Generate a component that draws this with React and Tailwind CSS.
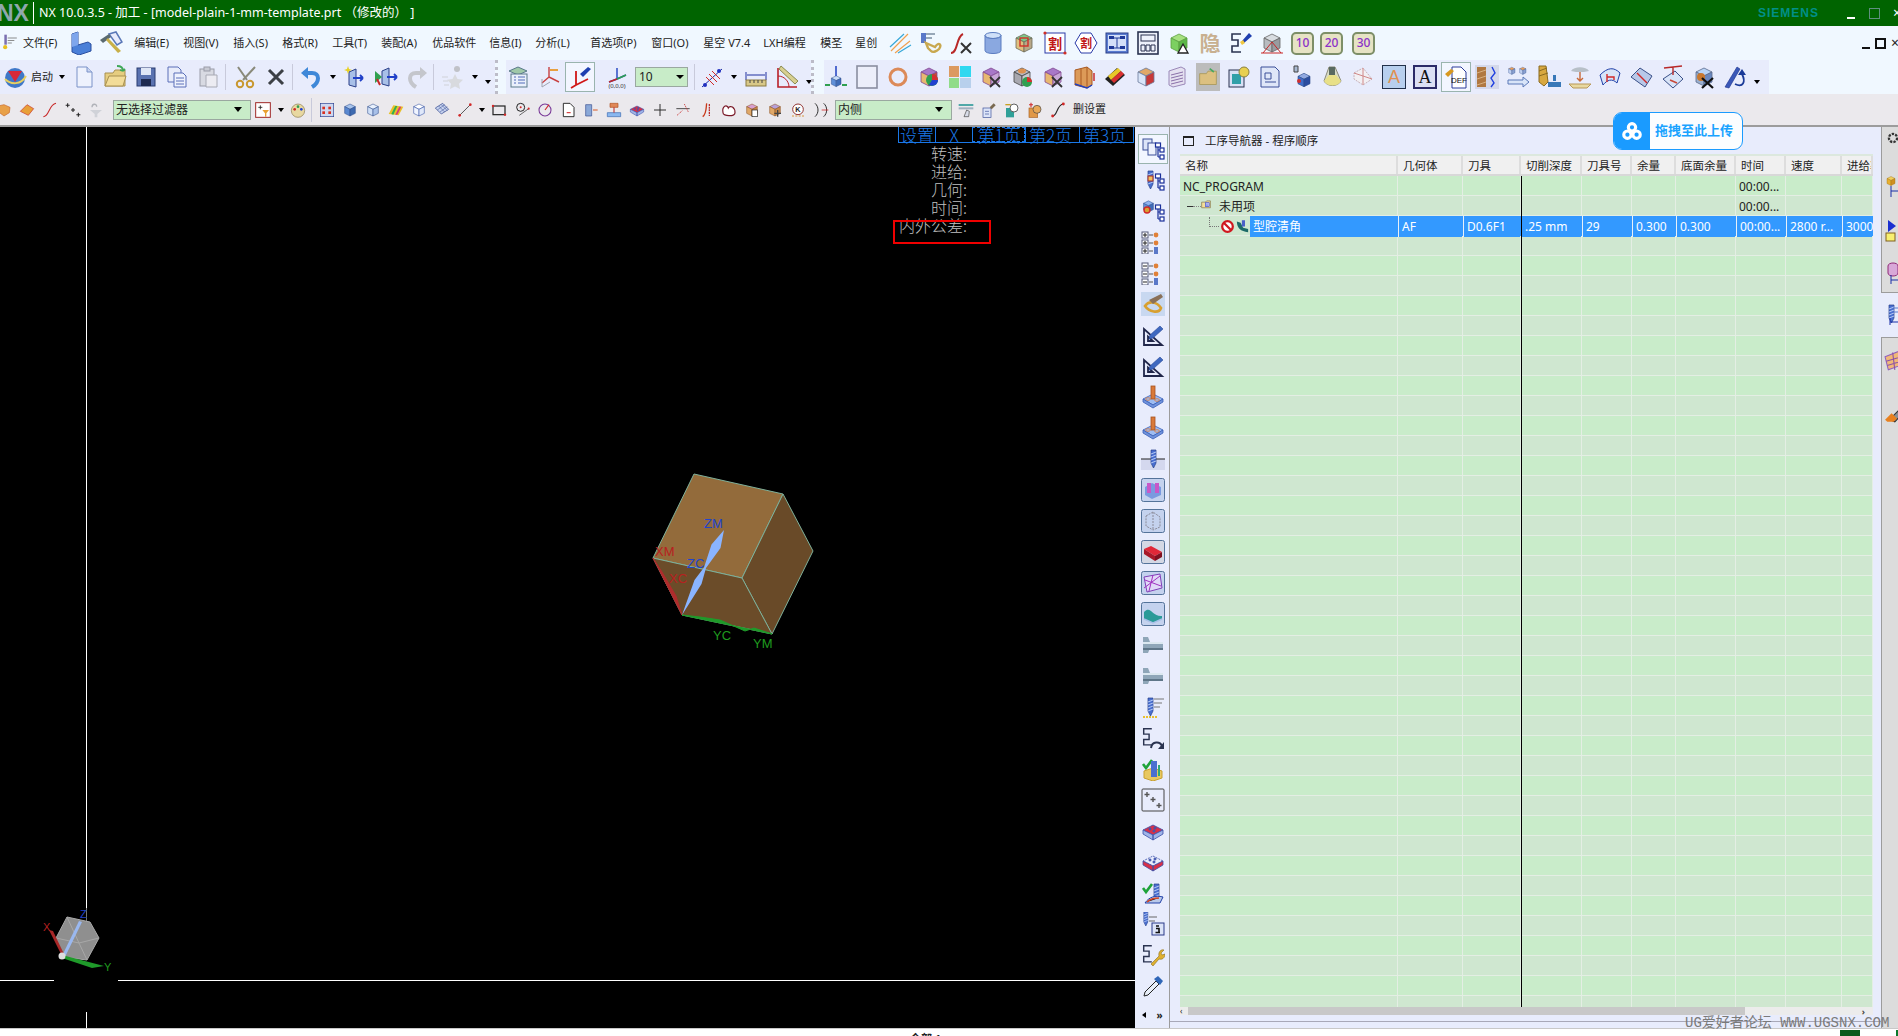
import React from 'react';

// small svg helpers for the NX toolbar pictures
const I = ({ children, className = 'w-6 h-6', box = '0 0 24 24' }) => (
  <svg viewBox={box} className={`shrink-0 ${className}`}>{children}</svg>
);

const Cube = ({ t = '#8fb4e8', l = '#5f8fd8', r = '#3f6cb8', s = '#2a4a8a', x = 0, y = 0, k = 1 }) => (
  <g transform={`translate(${x} ${y}) scale(${k})`} stroke={s} strokeWidth="0.8" strokeLinejoin="round">
    <path d="M12 3l8 4-8 4-8-4z" fill={t} />
    <path d="M4 7l8 4v10l-8-4z" fill={l} />
    <path d="M20 7l-8 4v10l8-4z" fill={r} />
  </g>
);

const Tree = ({ c = '#1a2f9a' }) => (
  <g stroke={c} fill="#fff" strokeWidth="1.2">
    <path d="M17 9v11M17 13h3M17 20h3" fill="none" />
    <rect x="14.5" y="6" width="5" height="4" />
    <rect x="19" y="11" width="4" height="4" />
    <rect x="19" y="18" width="4" height="4" />
  </g>
);

const Sbracket = () => <path d="M12 3H3v6h6v6H3v6h9" fill="none" stroke="#2a3350" strokeWidth="1.6" />;

const Drill = ({ x = 0, y = 0, k = 1 }) => (
  <g transform={`translate(${x} ${y}) scale(${k})`}>
    <path d="M6 2h5v13l-2.5 5L6 15z" fill="#4a6fd0" stroke="#25408a" strokeWidth="0.7" />
    <path d="M6 6l5-2M6 9l5-2M6 12l5-2M6 15l5-2" stroke="#cfe0ff" strokeWidth="0.8" />
  </g>
);

const Check = () => <path d="M2 7l3 4 6-8" fill="none" stroke="#1fa33a" strokeWidth="2.6" />;

const Plate = ({ wire }) => (
  <g stroke="#3a4fa8" strokeWidth="0.8">
    <path d="M12 6l10 5-10 5-10-5z" fill={wire ? '#e8ecfc' : '#d83048'} strokeDasharray={wire ? '2 1' : undefined} />
    <path d="M2 11v4l10 6v-5zM22 11v4l-10 6v-5z" fill={wire ? '#d83048' : '#9fb4e8'} />
    <circle cx="9" cy="10" r="1.1" fill="#4a5fb8" />
    <circle cx="14" cy="9" r="1.1" fill="#4a5fb8" />
    <circle cx="13" cy="12" r="1.1" fill="#4a5fb8" />
  </g>
);

const Pillar = () => (
  <g stroke="#3a5fb8" strokeWidth="0.8">
    <path d="M12 9l10 5-10 6-10-6z" fill="#9dbcf2" />
    <path d="M2 14v3l10 6 10-6v-3l-10 6z" fill="#6f92dc" />
    <rect x="10" y="1" width="4" height="13" fill="#d97a3a" stroke="#a8521e" />
    <ellipse cx="7" cy="14" rx="2.4" ry="1.3" fill="none" stroke="#d97a3a" />
    <ellipse cx="16" cy="15" rx="2.4" ry="1.3" fill="none" stroke="#d97a3a" />
  </g>
);

const CornerPen = () => (
  <g>
    <path d="M3 22V6l18 16zM7 18h5l-5-4.5z" fill="#e8ecfc" stroke="#20264a" strokeWidth="1.8" />
    <path d="M9 12L19 3l3 3-10 9-4 1z" fill="#3f69c0" stroke="#2a4a9a" strokeWidth="0.6" />
  </g>
);

const Holder = () => (
  <g>
    <path d="M2 4h5l2 5h13v6H9l-2 5H2z" fill="#8fa6b8" />
    <path d="M2 9h20v2H2z" fill="#dce8f0" />
    <path d="M2 15h20v2H2z" fill="#5f7688" />
  </g>
);

const Boxed = ({ children, bg = '#c4d2ee' }) => (
  <I>
    <rect x="0.5" y="0.5" width="23" height="23" rx="2" fill={bg} stroke="#54739a" />
    {children}
  </I>
);

const Arrow = ({ className = '' }) => (
  <span className={`w-0 h-0 shrink-0 border-x-[3px] border-x-transparent border-t-[4px] border-t-black ${className}`} />
);

const Sep = ({ className = 'h-[26px]' }) => <span className={`w-px bg-[#c8cadb] shrink-0 ${className}`} />;

const CjkIcon = ({ ch, c = '#c01818', s = 14, y = 17 }) => (
  <text x="12" y={y} fontSize={s} textAnchor="middle" fill={c} fontFamily="Noto Sans CJK SC, sans-serif" fontWeight="700">{ch}</text>
);

// ---------- menu row pictures ----------
const menuIcons = [
  <I key="m1"><path d="M3 20L20 3M7 22L22 10" stroke="#f0a050" strokeWidth="1.2" /><path d="M2 16L16 3M10 22L23 14" stroke="#38a8d8" strokeWidth="1.2" /></I>,
  <I key="m2"><path d="M2 2h5v10H2z" fill="#5a78c8" /><path d="M7 12l9 4c4-6 7-2 4 2-2 2-6 4-8 2l-3-3z" fill="none" stroke="#c8a850" strokeWidth="2.4" /><path d="M7 3h9M7 7h6" stroke="#98a8b8" strokeWidth="2" /></I>,
  <I key="m3"><path d="M1 22c7 0 5-16 12-19" fill="none" stroke="#b82828" strokeWidth="2" /><path d="M11 12l10 10M21 12L11 22" stroke="#333" strokeWidth="2" /></I>,
  <I key="m4"><ellipse cx="12" cy="4.5" rx="8" ry="3" fill="#cfe0f8" stroke="#5a7cc0" /><path d="M4 4.5v15c0 4 16 4 16 0v-15c0 4-16 4-16 0z" fill="#8aa8e0" stroke="#5a7cc0" /></I>,
  <I key="m5"><Cube t="#7cc88a" l="#e0c080" r="#b8a888" s="#6a6a58" /><rect x="8" y="7" width="8" height="8" fill="none" stroke="#d03028" strokeWidth="1.4" /></I>,
  <I key="m6"><rect x="2" y="2" width="20" height="20" fill="#fff" stroke="#2a3aa8" /><CjkIcon ch="割" y={18} /><circle cx="2" cy="2" r="1.6" fill="#d03028" /><circle cx="22" cy="22" r="1.6" fill="#d03028" /></I>,
  <I key="m7"><path d="M7 2h10l6 10-6 10H7L1 12z" fill="#fff" stroke="#2a3aa8" /><CjkIcon ch="割" s={12} y={16.5} /></I>,
  <I key="m8"><rect x="1" y="2" width="22" height="20" fill="#5a7cd0" stroke="#2a3f88" /><rect x="3" y="4" width="18" height="16" fill="#d4e0f8" /><path d="M7 7h10M12 7v10M7 17h10" stroke="#1f3a98" /><rect x="4" y="5" width="5" height="3" fill="#1f3a98" /><rect x="15" y="5" width="5" height="3" fill="#1f3a98" /><rect x="4" y="15" width="5" height="3" fill="#1f3a98" /><rect x="15" y="15" width="5" height="3" fill="#1f3a98" /></I>,
  <I key="m9"><rect x="2" y="1" width="20" height="22" fill="#eef2fb" stroke="#2a3350" strokeWidth="1.6" /><rect x="5" y="4" width="14" height="6" fill="none" stroke="#2a3350" /><path d="M5 14h4v6H5zM10 14h4v6h-4zM15 14h4v6h-4z" fill="none" stroke="#2a3350" /></I>,
  <I key="m10"><Cube t="#a6e080" l="#7cd060" r="#5cb848" s="#5ca040" /><path d="M16 13l5 9h-10z" fill="#fff" stroke="#222" strokeWidth="1.3" /></I>,
  <I key="m11"><CjkIcon ch="隐" c="#c8b090" s={21} y={20} /></I>,
  <I key="m12"><Sbracket /><path d="M13 10l7-8 3 3-8 7z" fill="#1f3fb0" /><path d="M11 11l3-2 2 3-3 2z" fill="#f0c840" /></I>,
  <I key="m13"><Cube t="#d8dce0" l="#b8bcc0" r="#989ca0" s="#666" /><path d="M1 22h22M12 11L3 22M12 11l9 11" stroke="#c82828" fill="none" /></I>,
];

const CountBtn = ({ n }) => (
  <span className="w-[23px] h-[23px] shrink-0 rounded-[5px] bg-[#e6e3c4] border-2 border-[#7d8f68] flex items-center justify-center text-[12px] font-medium text-[#8a30c8]">{n}</span>
);

// ---------- big toolbar pictures ----------
const bigA = [
  <I key="a1"><path d="M5 2h10l5 5v15H5z" fill="#eef2fd" stroke="#7a92c8" /><path d="M15 2v5h5" fill="#c8d4f0" stroke="#7a92c8" /></I>,
  <I key="a2"><path d="M2 8h8l2-3h10v16H2z" fill="#e6cd80" stroke="#a89050" /><path d="M2 21L6 11h17l-3 10z" fill="#f2dc98" stroke="#a89050" /><path d="M14 1c4 0 6 2 6 5m0 0l2-2m-2 2l-3-1" fill="none" stroke="#3fa858" strokeWidth="1.8" /></I>,
  <I key="a3"><rect x="3" y="3" width="18" height="18" fill="#5a72b0" stroke="#2a3c70" /><rect x="7" y="3" width="10" height="7" fill="#dfe6f6" /><rect x="7" y="14" width="10" height="7" fill="#1e2a50" /></I>,
  <I key="a4"><path d="M3 2h10l3 3v12H3z" fill="#e8ecfa" stroke="#5a6fb8" /><path d="M9 8h9l3 3v11H9z" fill="#eef2fd" stroke="#5a6fb8" /><path d="M11 13h8M11 16h8M11 19h8" stroke="#5a6fb8" /></I>,
  <I key="a5"><rect x="4" y="4" width="14" height="17" fill="#d8dae2" stroke="#9a9ca8" /><rect x="8" y="2" width="6" height="4" fill="#c8cad4" stroke="#9a9ca8" /><path d="M10 10h11v12H10z" fill="#ececf2" stroke="#a8aab4" /></I>,
];

const scissors = <I key="s"><path d="M10 15L22 2M14 15L5 2" stroke="#8a8a7a" strokeWidth="2" /><circle cx="7" cy="19" r="3.2" fill="none" stroke="#c89830" strokeWidth="2" /><circle cx="17" cy="19" r="3.2" fill="none" stroke="#c89830" strokeWidth="2" /></I>;
const cross = <I key="x"><path d="M5 5l14 14M19 5L5 19" stroke="#3c4046" strokeWidth="3" /></I>;
const undo = <I key="u"><path d="M13 22c8-5 8-14 0-14H4" fill="none" stroke="#3f88d8" strokeWidth="4" /><path d="M9 2L2 8l7 6z" fill="#3f88d8" /></I>;
const panelIn = <I key="p1"><path d="M6 7l7-3v18l-7-2z" fill="#a8c0e8" stroke="#2a3f88" /><path d="M10 13h10m0 0l-3-3m3 3l-3 3" stroke="#2040c8" strokeWidth="1.8" fill="none" /><path d="M5 1l1 3 3 1-3 1-1 3-1-3-3-1 3-1z" fill="#e8d020" /></I>;
const panelOut = <I key="p2"><path d="M8 6l7-3v18l-7-2z" fill="#a8c0e8" stroke="#2a3f88" /><path d="M1 6l7 6-7 6z" fill="#30a050" /><path d="M3 14l3 6" stroke="#c82828" strokeWidth="2" /><path d="M13 12h10m0 0l-3-3m3 3l-3 3" stroke="#2040c8" strokeWidth="1.8" fill="none" /></I>;
const redo = <I key="r"><path d="M11 22c-8-5-8-14 0-14h9" fill="none" stroke="#c4c6cc" strokeWidth="4" /><path d="M15 2l7 6-7 6z" fill="#c4c6cc" /></I>;
const star = <I key="st"><path d="M14 9l2.5 5 5.5.8-4 4 1 5.2-5-2.6-5 2.6 1-5.2-4-4 5.5-.8z" fill="#d8dade" /><path d="M1 12h6M2 16h5M3 20h5" stroke="#d0d2d8" /><circle cx="16" cy="4" r="3" fill="#c0c2c8" /></I>;

const bigB = [
  <I key="b1"><path d="M3 6l9-4 9 4-9 4z" fill="#9fc8a8" stroke="#5a7a8a" /><rect x="5" y="9" width="16" height="13" fill="#eaf0fb" stroke="#5a7a8a" /><path d="M8 12h2M8 15h2M8 18h2M12 12h7M12 15h7M12 18h7" stroke="#506ab8" /></I>,
  <I key="b2"><path d="M12 12V2M12 12l10 5M12 12l-7 6" stroke="#c84040" fill="none" strokeWidth="1.4" /><path d="M5 22v-8m0 8l8-5" stroke="#a0a4b0" fill="none" /><path d="M13 4h8v2h-8z" fill="#e8a040" /></I>,
];
const triadLight = (
  <span key="b3" className="w-[30px] h-[30px] -mx-[3px] shrink-0 bg-[#f2f6ff] border border-[#9ab4ae] flex items-center justify-center">
    <I><path d="M8 20V6M8 20l12-6M8 20l-5 3" stroke="#d01818" strokeWidth="1.8" fill="none" /><path d="M12 9l8-7 3 2-8 8z" fill="#1f3fb0" /></I>
  </span>
);
const triadAbs = <I key="b4"><path d="M12 14V3M12 14l9-4M12 14l-8 3" stroke="#2040c0" strokeWidth="1.4" fill="none" /><path d="M12 14l9-4" stroke="#30a050" strokeWidth="1.4" /><path d="M12 14l-8 3" stroke="#c02828" strokeWidth="1.4" /><text x="12" y="23" fontSize="6" textAnchor="middle" fill="#333">(0,0,0)</text></I>;
const netLine = <I key="b5"><path d="M2 22L22 4" stroke="#2030a0" /><path d="M6 12l8 8M9 9l8 8M12 6l8 8" stroke="#d02828" /><circle cx="5" cy="20" r="2" fill="#2030c0" /><circle cx="19" cy="6" r="2" fill="#2030c0" /></I>;
const ruler = <I key="b6"><path d="M2 7v8M22 7v8M3 10h18" stroke="#2030a0" fill="none" /><rect x="2" y="15" width="20" height="6" fill="#d8c888" stroke="#8a7a40" /><path d="M6 15v3M10 15v3M14 15v3M18 15v3" stroke="#444" /></I>;
const protractor = <I key="b7"><path d="M3 3v19h19" fill="none" stroke="#b82028" strokeWidth="1.6" /><path d="M3 11c6 0 11 5 11 11" fill="none" stroke="#b82028" /><path d="M6 1l17 15-3 3L4 4z" fill="#d8d090" stroke="#8a8a50" /></I>;

const bigC = [
  <I key="c1"><Cube k={0.6} x={5} y={9} t="#c8dcf8" /><path d="M12 11V1" stroke="#2040c0" strokeWidth="1.5" /><path d="M1 20h5M18 20h5" stroke="#30a050" strokeWidth="1.8" /></I>,
  <I key="c2"><rect x="2" y="1" width="20" height="22" fill="#eceefa" stroke="#8a8ea0" strokeWidth="1.6" /></I>,
  <I key="c3"><circle cx="12" cy="12" r="8" fill="none" stroke="#dc8a58" strokeWidth="3" /></I>,
  <I key="c4"><Cube t="#a878c8" l="#e8b870" r="#d04838" s="#804890" /><circle cx="15" cy="15" r="6" fill="#30a050" /><path d="M15 15V9a6 6 0 0 1 6 6z" fill="#d83030" /><path d="M15 15h6a6 6 0 0 1-9 5z" fill="#2040d0" /></I>,
  <I key="c5"><rect x="1" y="1" width="10" height="11" fill="#dc9a60" /><rect x="12" y="1" width="11" height="11" fill="#30d8f0" /><rect x="1" y="13" width="10" height="10" fill="#90dc88" /><rect x="12" y="13" width="11" height="10" fill="#b8d0ec" /></I>,
  <I key="c6"><Cube t="#a878c8" l="#e8b870" r="#c8a8d8" s="#804890" /><path d="M11 12l10 10M21 12L11 22" stroke="#333" strokeWidth="1.8" /></I>,
  <I key="c7"><Cube t="#b8b8c0" l="#a8a8b0" r="#c8c8d0" s="#444" /><ellipse cx="12" cy="6" rx="4" ry="2.4" fill="#dc9050" /><circle cx="17" cy="17" r="5" fill="#30a050" /><path d="M17 17v-5a5 5 0 0 1 5 5z" fill="#d83030" /></I>,
  <I key="c8"><Cube t="#a878c8" l="#e8b870" r="#c8a8d8" s="#804890" /><path d="M11 12l10 10M21 12L11 22" stroke="#333" strokeWidth="1.8" /></I>,
  <I key="c9"><path d="M3 5l12-3 5 4v14l-5 3-12-3z" fill="#dc9a58" stroke="#a85820" /><path d="M9 4v18M15 2v21" stroke="#a85820" /><path d="M3 19l12 4 5-3" fill="none" stroke="#2040c0" strokeWidth="1.4" /><path d="M22 16V8" stroke="#c82020" strokeWidth="1.4" /></I>,
  <I key="c10"><path d="M2 14L14 3l8 7-12 11z" fill="#222" /><path d="M5 11L15 3l3 3L8 15z" fill="#e8c828" /><path d="M8 15L18 6l3 3-10 9z" fill="#d83030" /></I>,
  <I key="c11"><Cube t="#e0a868" l="#d8e4f8" r="#c83838" s="#6a7a9a" /></I>,
  <I key="c12"><path d="M4 6l12-4 4 2v15l-12 3-4-2z" fill="#e4e0f0" stroke="#9a88b8" /><path d="M6 10l12-3M6 13l12-3M6 16l12-3M6 19l12-3" stroke="#8a70a8" /></I>,
  <span key="c13" className="w-6 h-[28px] -my-[2px] shrink-0 bg-[#bcbcbc] flex items-center justify-center"><I className="w-5 h-5"><path d="M2 8h8l2-3h10v16H2z" fill="#dcc080" stroke="#a89858" /><path d="M14 2l5 4" stroke="#48a860" strokeWidth="2" /></I></span>,
  <I key="c14"><rect x="2" y="5" width="15" height="17" fill="#d8e0f4" stroke="#2a3350" /><rect x="5" y="9" width="9" height="10" fill="#30a0a8" /><circle cx="17" cy="7" r="5" fill="#e8d050" stroke="#8a8040" /></I>,
  <I key="c15"><path d="M3 2h14l4 4v16H3z" fill="#dfe6f8" stroke="#3a4f98" /><path d="M7 8h6v6H7zM7 17h11" stroke="#3a4f98" fill="none" /></I>,
  <I key="c16"><path d="M5 1h4v6H5z" fill="#a8b8d0" stroke="#444" /><Cube k={0.75} x={6} y={6} t="#90a8e0" l="#3f6cc8" r="#2a4ca0" /><circle cx="10" cy="16" r="2" fill="#d03030" /></I>,
  <I key="c17"><path d="M9 2l6 0 6 14c-3 6-14 6-17 0z" fill="#d8dcc8" stroke="#8a8a78" /><path d="M4 16c3 6 14 6 17 0l-5-6H9z" fill="#e8e088" /><path d="M9 2h6v8H9z" fill="#5a6a60" /></I>,
  <I key="c18"><path d="M3 8l9-5 9 11-9 6-9-6z" fill="#f2f0f4" stroke="#c8b0b8" strokeDasharray="2 1" /><path d="M3 8l18 6M12 3v17" stroke="#d08888" /></I>,
  <span key="c19" className="w-6 h-6 shrink-0 bg-[#b8cfee] border border-[#22304a] flex items-center justify-center text-[18px] text-[#e09050] font-['Liberation_Sans',sans-serif] leading-none">A</span>,
  <span key="c20" className="w-6 h-6 shrink-0 bg-[#dcdff4] border-2 border-[#2c2a68] flex items-center justify-center text-[18px] text-[#111] font-['Liberation_Serif',serif] leading-none">A</span>,
  <span key="c21" className="w-[30px] h-[30px] -mx-[3px] shrink-0 bg-[#f2f6ff] border border-[#9ab4ae] flex items-center justify-center">
    <I><path d="M8 2h9l5 5v16H8z" fill="#fff" stroke="#2a3a9a" /><text x="15" y="18" fontSize="8" textAnchor="middle" fill="#111" fontFamily="Liberation Sans, sans-serif">DEF</text><path d="M1 9l6-5 3 2-6 6z" fill="#d89820" /></I>
  </span>,
  <span key="c22" className="w-6 h-6 shrink-0 bg-[#d4d8ea] flex items-center"><I><rect x="2" y="2" width="9" height="20" fill="#b07840" /><path d="M2 8l9-3M2 14l9-3M2 20l9-3" stroke="#d8b080" /><path d="M17 2l3 6-4 5 3 5-3 4" fill="none" stroke="#2040e0" strokeWidth="1.4" /></I></span>,
  <I key="c23"><Cube k={0.4} x={1} y={1} t="#e8a060" l="#c0d0f0" r="#8aa0d0" /><Cube k={0.4} x={12} y={1} t="#e8a060" l="#c0d0f0" r="#8aa0d0" /><path d="M2 15h15v-3l6 5-6 5v-3H2z" fill="#d8e4f8" stroke="#5a78b8" /></I>,
  <I key="c24"><path d="M2 1h7l2 16-4 4-5-4z" fill="#d8a840" stroke="#8a6a20" /><path d="M2 6l8-3M2 11l9-3" stroke="#8a6a20" /><rect x="16" y="10" width="3" height="6" fill="#3878b8" /><path d="M11 17h13v5H11z" fill="#3878b8" /></I>,
  <I key="c25"><path d="M3 6c3-5 15-5 18 0l-5 1H8z" fill="#b8c0c8" /><path d="M12 7v9M9 13l3 3 3-3" stroke="#c86838" strokeWidth="1.4" fill="none" /><path d="M1 19h22l-4 4H5z" fill="#e8d8a0" stroke="#b89858" /></I>,
  <I key="c26"><path d="M1 10c8-8 14-8 20-2l-3 10c-5-5-10-3-14 2z" fill="#d8e4f8" stroke="#2040a8" /><path d="M8 9v8M8 12h7v3" stroke="#d02828" strokeWidth="1.4" fill="none" /></I>,
  <I key="c27"><path d="M1 12L10 3l12 8-7 11z" fill="#b8c8e8" stroke="#3a5088" /><path d="M7 8l10 10" stroke="#d02828" strokeWidth="1.4" /></I>,
  <I key="c28"><path d="M2 14L14 6l8 8-10 9z" fill="#d8e4f8" stroke="#3a5088" /><path d="M3 3l18-2M12 2v8" stroke="#b82828" strokeWidth="1.4" /><path d="M9 15l7 3" stroke="#c84838" strokeWidth="1.6" /></I>,
  <I key="c29"><Cube t="#b8d4f8" l="#9ab0d0" r="#6a88c0" s="#5a6a8a" /><circle cx="9" cy="12" r="4" fill="#c87830" /><path d="M10 13l11 10M21 13L10 23" stroke="#111" strokeWidth="2.2" /></I>,
  <I key="c30"><path d="M2 22L14 2l3 2L6 23z" fill="#3a58b8" stroke="#1a2f8a" strokeWidth="0.6" /><path d="M12 19c8 4 11-2 7-10" fill="none" stroke="#1a3a98" strokeWidth="1.8" /><path d="M19 4l4 6h-8z" fill="#1a3a98" /></I>,
];

// ---------- selection row pictures ----------
const smallA = [
  <I key="d1" className="w-4 h-4"><path d="M3 6l9-2 9 4-1 8-8 5-8-6z" fill="#e8a048" stroke="#c86828" /></I>,
  <I key="d2" className="w-4 h-4"><path d="M2 14L12 4l10 6-8 10z" fill="#e8a038" stroke="#c83020" /></I>,
  <I key="d3" className="w-4 h-4"><path d="M2 22c9 0 8-18 19-20" fill="none" stroke="#c82828" strokeWidth="1.6" /></I>,
  <I key="d4" className="w-4 h-4"><path d="M4 2v6M1 5h6M12 9v6M9 12h6M20 16v6M17 19h6" stroke="#222" strokeWidth="1.6" /></I>,
  <I key="d5" className="w-4 h-4"><path d="M3 12h18l-7 6v5h-4v-5z" fill="#d0d2d8" /><path d="M6 8c0-6 7-6 7-1" fill="none" stroke="#b0b2b8" strokeWidth="2" /></I>,
];

const smallB = [
  <I key="e1" className="w-4 h-4"><rect x="2" y="2" width="20" height="20" fill="#cfd8f0" stroke="#2a4090" /><rect x="5" y="7" width="4" height="4" fill="#d83020" /><rect x="14" y="7" width="4" height="4" fill="#d83020" /><rect x="5" y="14" width="4" height="4" fill="#d83020" /><rect x="14" y="14" width="4" height="4" fill="#d83020" /></I>,
  <I key="e2" className="w-4 h-4"><Cube t="#a8c4ec" l="#5a88d0" r="#3e6ab0" /></I>,
  <I key="e3" className="w-4 h-4"><Cube t="#e8f0fc" l="#d0e0f8" r="#a8c0e8" /></I>,
  <I key="e4" className="w-4 h-4"><path d="M1 18L8 5l15 2-7 13z" fill="#e8c028" /><path d="M5 18L11 6h3L8 19z" fill="#30b050" /><path d="M11 19l6-12h3l-6 12z" fill="#d83878" /></I>,
  <I key="e5" className="w-4 h-4"><Cube t="#fff" l="#f0f4ff" r="#e0e8fa" s="#2a4aa0" /></I>,
  <I key="e6" className="w-4 h-4"><path d="M2 9l11-7 9 9-11 7z" fill="#c8d4f0" stroke="#2a3f88" /><path d="M7 6l9 9M11 4l9 9M5 12L16 4M9 15l11-8" stroke="#2a3f88" strokeWidth="0.7" /></I>,
  <I key="e7" className="w-4 h-4"><path d="M4 20L20 4" stroke="#333" strokeWidth="1.2" /><circle cx="4" cy="20" r="2" fill="#d02828" /><circle cx="20" cy="4" r="2" fill="#d02828" /></I>,
];

const smallC = [
  <I key="f1" className="w-4 h-4"><rect x="3" y="6" width="18" height="13" fill="none" stroke="#222" strokeWidth="1.8" /><circle cx="3" cy="6" r="1.8" fill="#d02828" /><circle cx="21" cy="19" r="1.8" fill="#d02828" /></I>,
  <I key="f2" className="w-4 h-4"><circle cx="10" cy="8" r="6" fill="none" stroke="#222" strokeWidth="1.5" /><path d="M8 20l14-10" stroke="#222" /><circle cx="10" cy="8" r="1.5" fill="#d02828" /><circle cx="22" cy="10" r="1.6" fill="#d02828" /></I>,
  <I key="f3" className="w-4 h-4"><circle cx="12" cy="12" r="9" fill="none" stroke="#7a3a98" strokeWidth="1.6" /><path d="M12 12l6-8" stroke="#d02828" strokeWidth="1.6" /></I>,
  <I key="f4" className="w-4 h-4"><path d="M5 2h10l6 6v14H5z" fill="#fff" stroke="#222" strokeWidth="1.4" /><path d="M10 16h6" stroke="#d02828" strokeWidth="1.6" /></I>,
  <I key="f5" className="w-4 h-4"><path d="M4 4h9v17H4z" fill="#8aa8d8" stroke="#3a5090" /><path d="M15 12h7" stroke="#d86030" strokeWidth="1.6" /></I>,
  <I key="f6" className="w-4 h-4"><path d="M2 16h20v6H2z" fill="#8ab8f0" stroke="#3a68b0" /><path d="M6 2h12v6H6z" fill="#e08858" stroke="#b0501e" /><path d="M12 8v8" stroke="#c02020" strokeWidth="1.5" /></I>,
  <I key="f7" className="w-4 h-4"><Plate /></I>,
  <I key="f10" className="w-4 h-4"><path d="M3 12h18M12 3v18" stroke="#222" strokeWidth="1.4" /></I>,
  <I key="f11" className="w-4 h-4"><path d="M2 10h20" stroke="#222" strokeWidth="1.2" /><path d="M14 3l6 12M3 20l8-7" stroke="#c83030" strokeWidth="1.2" strokeDasharray="2 1" /></I>,
  <I key="f12" className="w-4 h-4"><path d="M7 22c6-4 5-14 6-20" fill="none" stroke="#c83818" strokeWidth="2" /><path d="M17 3v18" stroke="#b82020" strokeWidth="1.8" strokeDasharray="3 1" /></I>,
  <I key="f13" className="w-4 h-4"><path d="M3 16c-2-10 6-13 8-7 3-5 10-1 10 7 0 6-18 6-18 0z" fill="#fff" stroke="#7a1a28" strokeWidth="1.8" /></I>,
  <I key="f14" className="w-4 h-4"><Cube t="#d8a0d0" l="#e0a868" r="#c88848" s="#8a5020" /><rect x="12" y="12" width="8" height="10" fill="#fff" stroke="#222" /></I>,
  <I key="f15" className="w-4 h-4"><Cube t="#b8a0d8" l="#e0a868" r="#c88848" s="#8a5020" /><path d="M16 12v10M11 17h10" stroke="#444" strokeWidth="2" /></I>,
  <I key="f16" className="w-4 h-4"><circle cx="12" cy="11" r="8" fill="#fff" stroke="#8a2a28" strokeWidth="1.4" /><text x="12" y="15" fontSize="11" fontWeight="700" textAnchor="middle" fill="#222" fontFamily="Liberation Sans, sans-serif">K</text><path d="M3 21h18" stroke="#d89030" strokeWidth="1.4" strokeDasharray="3 2" /></I>,
  <I key="f17" className="w-4 h-4"><path d="M3 2c6 5 6 15 0 20M16 2c6 5 6 15 0 20" fill="none" stroke="#222" strokeWidth="1.4" /><path d="M13 12h10" stroke="#d02828" strokeWidth="1.2" /></I>,
];

const smallD = [
  <I key="g1" className="w-4 h-4"><rect x="1" y="3" width="22" height="3" fill="#50a8a8" /><rect x="1" y="8" width="22" height="3" fill="#a0b0c0" /><path d="M9 22l4-10 4 2-1 8z" fill="#d8dce8" stroke="#444" /></I>,
  <I key="g2" className="w-4 h-4"><rect x="3" y="9" width="12" height="14" fill="#dce4f8" stroke="#3a4f98" /><path d="M6 14h6M6 18h6" stroke="#3a4f98" /><path d="M13 8l6-6 3 3-6 6z" fill="#7a6a50" /></I>,
  <I key="g3" className="w-4 h-4"><rect x="3" y="9" width="12" height="14" fill="#30a098" /><circle cx="15" cy="9" r="6" fill="#fff" stroke="#555" strokeWidth="1.4" /><rect x="2" y="3" width="8" height="2" fill="#c8a020" /></I>,
  <I key="g4" className="w-4 h-4"><rect x="3" y="9" width="13" height="14" fill="#e09848" stroke="#a86020" /><circle cx="15" cy="11" r="6" fill="#e8a858" stroke="#444" /><path d="M6 1v7M3 4h6" stroke="#d02828" strokeWidth="1.6" /></I>,
  <I key="g5" className="w-4 h-4"><path d="M4 21c7 0 6-17 16-18" fill="none" stroke="#222" strokeWidth="1.6" /><circle cx="4" cy="21" r="2.2" fill="#d02828" /><circle cx="20" cy="3" r="2.2" fill="#d02828" /></I>,
];

// ---------- left strip ----------
const sideIcons = [
  <span key="1" className="w-[30px] h-[30px] -my-[3px] shrink-0 bg-[#f2f6ff] border border-[#9ab4ae] flex items-center justify-center"><I><rect x="2" y="2" width="9" height="11" fill="#dce4f8" stroke="#3a4f98" /><rect x="7" y="6" width="8" height="12" fill="#eef2fd" stroke="#3a4f98" /><Tree /></I></span>,
  <I key="2"><Drill x={1} y={1} /><rect x="7" y="8" width="5" height="5" fill="#f0c060" stroke="#a02828" /><Tree /></I>,
  <I key="3"><Cube k={0.62} t="#90b4f0" l="#5f8fd8" r="#3f6cb8" /><circle cx="6" cy="11" r="3" fill="#d8a030" stroke="#d02828" strokeWidth="1.4" /><Tree /></I>,
  <I key="4"><g fill="#fff" stroke="#555a78"><rect x="1" y="2" width="6" height="6" /><rect x="1" y="10" width="6" height="6" /><rect x="1" y="18" width="6" height="6" /></g><path d="M2 5h4M4 3v4M2 13h4M4 11v4M2 21h4M4 19v4" stroke="#222" /><path d="M8 5h4M8 13h4M8 21h4" stroke="#555" /><circle cx="15" cy="5" r="2.4" fill="#e08038" /><circle cx="15" cy="13" r="2.4" fill="#e08038" /><rect x="13" y="17" width="4" height="7" fill="#5a78c8" /></I>,
  <I key="5"><g fill="#fff" stroke="#555a78"><rect x="1" y="2" width="6" height="6" /><rect x="1" y="10" width="6" height="6" /><rect x="1" y="18" width="6" height="6" /></g><path d="M2 5h4M2 13h4M2 21h4" stroke="#222" /><path d="M8 5h4M8 13h4M8 21h4" stroke="#555" /><circle cx="15" cy="5" r="2.4" fill="#e08038" /><circle cx="15" cy="13" r="2.4" fill="#e08038" /><rect x="13" y="17" width="4" height="7" fill="#5a78c8" /></I>,
  <I key="6"><rect x="0" y="0" width="24" height="24" fill="#c8d8f0" /><path d="M4 14c4-6 12-4 16 2-2 6-12 4-16-2z" fill="none" stroke="#d8a030" strokeWidth="2.6" /><path d="M8 8l12-6 2 3-10 7z" fill="#8a7058" /></I>,
  <I key="7"><CornerPen /></I>,
  <I key="8"><CornerPen /></I>,
  <I key="9"><Pillar /></I>,
  <I key="10"><Pillar /></I>,
  <I key="11"><rect x="0" y="12" width="24" height="11" fill="#d4d8ee" /><path d="M0 12h24" stroke="#222" /><Drill x={4} y={1} /></I>,
  <Boxed key="12"><path d="M4 9l7-4 9 4v8l-9 4-7-4z" fill="#7a9ae0" /><path d="M6 5h4v10H6zM14 5h4v10h-4z" fill="#c858c8" /></Boxed>,
  <Boxed key="13"><path d="M5 7l7-4 7 5v10l-7 3-7-4z" fill="none" stroke="#8a8a98" strokeDasharray="2 1" /><path d="M12 3v18" stroke="#8a8a98" strokeDasharray="2 1" /></Boxed>,
  <Boxed key="14" bg="#d4d8e4"><path d="M3 9l7-3 11 6-7 4z" fill="#e02838" /><path d="M3 9v5l11 7v-5z" fill="#a81828" /><path d="M14 16v5l7-4v-5z" fill="#801020" /></Boxed>,
  <Boxed key="15"><path d="M3 6l16-3 2 14-15 4z" fill="#e0d8f8" stroke="#8040b8" /><path d="M4 9l16 6M12 4l-4 16M3 17L19 5" stroke="#a030c0" /></Boxed>,
  <Boxed key="16"><path d="M3 10c7-7 8 5 18 4v3l-9 4-9-4z" fill="#2a9a98" /><path d="M3 17l9 4 9-4" fill="none" stroke="#a8c0e8" strokeWidth="1.5" /></Boxed>,
  <I key="17"><Holder /></I>,
  <I key="18"><Holder /></I>,
  <I key="19"><Drill x={1} y={1} /><path d="M13 4h10M13 8h8M13 12h6" stroke="#777" /><path d="M2 22h14" stroke="#e8c030" strokeWidth="2" strokeDasharray="2 1" /></I>,
  <I key="20"><g transform="scale(0.9)"><Sbracket /></g><path d="M10 22c1-7 9-7 11-2" fill="none" stroke="#2a3350" strokeWidth="2" /><path d="M23 16v7h-6z" fill="#2a3350" /></I>,
  <I key="21"><Check /><path d="M3 14l9-3 9 3v7l-9 3-9-3z" fill="#e8c860" stroke="#c8a030" /><rect x="10" y="4" width="6" height="16" fill="#4a6fd0" /><path d="M18 8v11" stroke="#30a878" strokeWidth="2" /></I>,
  <I key="22"><rect x="1" y="1" width="22" height="22" fill="none" stroke="#444" rx="1" /><path d="M6 4v5M3.5 6.5h5M12 9v5M9.5 11.500h5M18 15v5M15.500 17.500h5" stroke="#555" strokeWidth="1.4" /></I>,
  <I key="23"><Plate /></I>,
  <I key="24"><Plate wire /></I>,
  <I key="25"><Check /><Drill x={7} y={1} /><path d="M4 22c4-6 10-8 18-6l-3 6z" fill="#b8c8e8" stroke="#2040a8" /><path d="M6 21c4-4 8-4 12-4" stroke="#d84828" strokeWidth="1.4" /></I>,
  <I key="26"><Drill x={-2} y={-2} k={0.8} /><path d="M8 5h8M8 9h6" stroke="#666" /><rect x="11" y="11" width="12" height="12" fill="#dce4f8" stroke="#2a3a8a" /><path d="M15 14h3M15 16.500h3v4M14.500 20.500h4.500" stroke="#111" strokeWidth="1.6" fill="none" /></I>,
  <I key="27"><g transform="scale(0.9)"><Sbracket /></g><path d="M10 21l8-8c-1-4 2-7 5-6l-3 3 1 2 3-1c0 4-3 6-6 5l-6 7z" fill="#e0b030" stroke="#8a7020" strokeWidth="0.6" /></I>,
  <I key="28"><path d="M3 22l1-4L15 7l3 3L7 21z" fill="#e8eef8" stroke="#222" /><path d="M13 5l4-3 5 5-3 4z" fill="#2f66b8" /></I>,
];

const menus = [
  ['编辑(E)', 'w-[49px]'], ['视图(V)', 'w-[50px]'], ['插入(S)', 'w-[49px]'], ['格式(R)', 'w-[50px]'],
  ['工具(T)', 'w-[49px]'], ['装配(A)', 'w-[51px]'], ['优品软件', 'w-[57px]'], ['信息(I)', 'w-[46px]'],
  ['分析(L)', 'w-[55px]'], ['首选项(P)', 'w-[61px]'], ['窗口(O)', 'w-[52px]'], ['星空 V7.4', 'w-[60px]'],
  ['LXH编程', 'w-[57px]'], ['模圣', 'w-[35px]'], ['星创', 'w-[30px]'],
];

const cols = ['名称', '几何体', '刀具', '切削深度', '刀具号', '余量', '底面余量', '时间', '速度', '进给率'];
const gridCols = 'grid grid-cols-[218px_65px_58px_61px_50px_44px_60px_50px_56px_31px]';

const Cell = ({ children }) => (
  <div className="h-full border-r border-[#e4eee4] overflow-hidden whitespace-nowrap px-[3px] leading-[21px]">{children}</div>
);

const rows = Array.from({ length: 42 }, (_, i) => i);

const SelFolder = () => (
  <I className="w-[15px] h-[15px]"><path d="M1 5h6l2-2h6v11H1z" fill="#f4de98" stroke="#7a6a40" /><rect x="7" y="6" width="6" height="6" fill="#fff" stroke="#1a2fd0" /><path d="M8 8h4M8 10h4" stroke="#1a2fd0" /></I>
);

const Row = ({ i }) => {
  const bg = i % 2 === 0 ? 'bg-[#c9ecca]' : 'bg-[#cfe7d0]';
  if (i === 2) {
    return (
      <div className={`${gridCols} h-5 border-b border-[#e4eee4] bg-[#cfe7d0] text-white`}>
        <div className="h-full flex items-center relative">
          <span className="ml-[29px] w-[10px] h-[10px] -mt-[10px] border-l border-b border-dotted border-[#777]" />
          <I className="w-[15px] h-[15px] ml-[1px]"><circle cx="12" cy="12" r="8.500" fill="#fff" stroke="#d01820" strokeWidth="3.600" /><path d="M6 6l12 12" stroke="#d01820" strokeWidth="3.600" /></I>
          <I className="w-[15px] h-[15px]"><path d="M3 4c0 10 6 16 18 17v-5l-8-2-4-8z" fill="#1c6a68" /><rect x="11" y="2" width="5" height="10" fill="#4a5fc8" /></I>
          <div className="flex-1 h-full bg-[#3399ff] pl-[3px] leading-[21px]">型腔清角</div>
        </div>
        {['AF', 'D0.6F1', '.25 mm', '29', '0.300', '0.300', '00:00...', '2800 r...', '3000'].map((t, k) => (
          <div key={k} className="h-full bg-[#3399ff] border-l border-[#e8f0f8] px-[3px] overflow-hidden whitespace-nowrap leading-[21px]">{t}</div>
        ))}
      </div>
    );
  }
  return (
    <div className={`${gridCols} h-5 border-b border-[#e4eee4] ${bg}`}>
      <Cell>
        {i === 0 && 'NC_PROGRAM'}
        {i === 1 && (
          <span className="flex items-center h-full pt-[1px]">
            <span className="ml-[4px] w-[6px] h-px bg-[#333]" />
            <span className="w-[8px] border-b border-dotted border-[#888]" />
            <SelFolder />
            <span className="ml-[3px]">未用项</span>
          </span>
        )}
      </Cell>
      <Cell /><Cell /><Cell /><Cell /><Cell /><Cell />
      <Cell>{i < 2 && '00:00...'}</Cell>
      <Cell /><Cell />
    </div>
  );
};

export default function App() {
  return (
    <div className="relative w-[1898px] h-[1036px] overflow-hidden flex flex-col bg-white text-[#222] text-[11px] font-['Noto_Sans','Noto_Sans_CJK_SC',sans-serif]">
      {/* title bar */}
      <div className="h-[26px] shrink-0 bg-[#006400] flex items-center text-white">
        <span className="-ml-[3px] text-[23px] font-bold text-[#8fa8ac] leading-none font-['Liberation_Sans',sans-serif]">NX</span>
        <span className="ml-[4px] w-px h-[22px] bg-white" />
        <span className="ml-[5px] text-[12.500px] whitespace-nowrap">NX 10.0.3.5 - 加工 - [model-plain-1-mm-template.prt （修改的） ]</span>
        <span className="ml-auto text-[12px] font-bold tracking-[1px] text-[#009088] font-['Liberation_Sans',sans-serif]">SIEMENS</span>
        <span className="ml-[28px] mt-[10px] w-[8px] h-[2px] bg-white" />
        <span className="ml-[14px] w-[11px] h-[11px] border border-[#5f8f7f]" />
        <span className="ml-[13px] text-[14px] leading-none w-[5px] overflow-hidden">×</span>
      </div>

      {/* menu row */}
      <div className="h-[34px] shrink-0 bg-[#f0f8ff] flex items-center">
        <I className="w-5 h-5 ml-[1px]"><path d="M4 2h3v12H4z" fill="#7a6fb0" /><circle cx="5" cy="17" r="2.500" fill="#e8c020" /><path d="M8 6h11M8 9h8M8 12h5" stroke="#777" /></I>
        <span className="ml-[2px] whitespace-nowrap">文件(F)</span>
        <I className="w-6 h-6 ml-[12px]"><path d="M3 3l6-2v13l10-3 3 2v7l-12 4-7-3z" fill="#4a80d8" stroke="#2a4fa0" /><path d="M3 3l6-2v13l-6 2z" fill="#7ea6ec" /></I>
        <I className="w-6 h-6 ml-[6px] mr-[11px]"><path d="M10 3l7-2 6 10-5 3z" fill="#e8ecfc" stroke="#5a78b8" strokeWidth="1.500" /><path d="M1 9l9-6 2 3-8 6z" fill="#5a6a70" /><path d="M7 9l12 13 3-2L9 7z" fill="#c8b048" /></I>
        {menus.map(([t, c]) => (
          <span key={t} className={`whitespace-nowrap shrink-0 ${c}`}>{t}</span>
        ))}
        <div className="ml-auto mr-[523px] flex items-center gap-[7px]">
          {menuIcons}
          <CountBtn n="10" />
          <span className="-ml-[1px]"><CountBtn n="20" /></span>
          <span className="ml-[2px]"><CountBtn n="30" /></span>
        </div>
      </div>
      <div className="absolute top-[36px] right-0 flex items-end gap-[5px]">
        <span className="w-[8px] h-[2px] bg-[#111]" />
        <span className="w-[11px] h-[11px] border-2 border-[#111]" />
        <span className="w-[7px] text-[14px] leading-[13px] overflow-hidden">×</span>
      </div>

      {/* main toolbar */}
      <div className="h-[34px] shrink-0 bg-[#f0f8ff] flex">
        <div className="w-[1769px] bg-[#e8ecfc] flex items-center">
          <div className="w-[222px] ml-[3px] flex items-center gap-[7px]">
            <I><circle cx="12" cy="13" r="10" fill="#3f78c8" /><path d="M5 6l14 0-7 11z" fill="#d82838" /><path d="M2 14c6 6 16 6 21-3" fill="none" stroke="#e8d060" strokeWidth="2" /></I>
            <span className="-ml-[3px] whitespace-nowrap">启动</span>
            <Arrow className="-ml-[1px]" />
            {bigA}
          </div>
          <Sep />
          <div className="w-[66px] pl-[7px] flex items-center gap-[7px]">{scissors}{cross}</div>
          <Sep />
          <div className="w-[140px] pl-[6px] flex items-center gap-[7px]">{undo}<Arrow />{panelIn}{panelOut}{redo}</div>
          <Sep />
          <div className="w-[61px] pl-[7px] flex items-center gap-[7px]">{star}<Arrow /><Arrow className="mt-[10px]" /></div>
          <div className="w-[11px] self-stretch bg-[#f0f8ff] border-l-[3px] border-dotted border-[#bcbcc8]" />
          <div className="w-[305px] flex items-center gap-[7px]">
            {bigB}
            {triadLight}
            <span className="ml-[6px]">{triadAbs}</span>
            <div className="w-[53px] h-[20px] -ml-[1px] shrink-0 bg-[#c8ecc8] border border-[#9aa8a0] flex items-center justify-between px-[3px] text-[12px]"><span>10</span><Arrow className="border-x-[4px] border-t-[4px]" /></div>
            <Sep className="h-[26px] -ml-[1px]" />
            <span className="-ml-[2px]">{netLine}</span>
            <Arrow />
            {ruler}
            {protractor}
            <Arrow className="mt-[10px]" />
          </div>
          <div className="w-[13px] self-stretch bg-[#f0f8ff] border-l-[3px] border-dotted border-[#bcbcc8]" />
          <div className="flex items-center gap-[7px]">
            {bigC}
            <Arrow className="mt-[10px]" />
          </div>
        </div>
      </div>

      {/* selection bar */}
      <div className="h-[31px] shrink-0 bg-[#ebe9ed] flex items-center">
        <div className="w-[111px] -ml-[4px] flex items-center gap-[7px]">{smallA}</div>
        <div className="w-[138px] h-[20px] ml-[6px] shrink-0 bg-[#c8ecc8] border border-[#9aa8a0] flex items-center justify-between pl-[2px] pr-[8px] text-[12px] whitespace-nowrap"><span>无选择过滤器</span><Arrow className="border-x-[4px] border-t-[5px]" /></div>
        <I className="w-4 h-4 ml-[4px]"><rect x="1" y="1" width="22" height="22" fill="#fff" stroke="#a02828" strokeWidth="1.500" /><path d="M8 5v6M5 8h6" stroke="#222" strokeWidth="1.300" /><path d="M11 12h10l-4 5v5h-2v-5z" fill="#e8a030" /></I>
        <Arrow className="ml-[7px]" />
        <I className="w-4 h-4 ml-[6px]"><circle cx="12" cy="13" r="10" fill="#e8d8a0" stroke="#8a7a50" /><circle cx="7" cy="11" r="2" fill="#d02828" /><circle cx="12" cy="7" r="2" fill="#30a050" /><circle cx="17" cy="11" r="2" fill="#2040d0" /></I>
        <Sep className="ml-[5px] h-[24px]" />
        <div className="ml-[7px] flex items-center gap-[7px]">
          {smallB}
          <Arrow className="-ml-[1px] -mr-[1px]" />
          {smallC}
        </div>
        <div className="w-[117px] h-[20px] ml-[6px] shrink-0 bg-[#c8ecc8] border border-[#9aa8a0] flex items-center justify-between pl-[2px] pr-[8px] text-[12px]"><span>内侧</span><Arrow className="border-x-[4px] border-t-[5px]" /></div>
        <div className="ml-[6px] flex items-center gap-[7px]">{smallD}</div>
        <span className="ml-[7px] whitespace-nowrap">删设置</span>
      </div>

      {/* work area */}
      <div className="h-[903px] shrink-0 border-t-2 border-[#9c9c9c] flex">
        <div className="relative w-[1135px] shrink-0 bg-black overflow-hidden">
          <svg viewBox="0 127 1135 901" className="w-full h-full">
            <path d="M86.500 127V908M86.500 1012V1028M0 980.500H54M118 980.500H1135" stroke="#fff" />
            <path d="M86.500 908V948" stroke="#777" />
            {/* the part */}
            <g stroke="#7fb09a" strokeWidth="1">
              <path d="M694 474L783 494L742 578L653 558z" fill="#936b3b" />
              <path d="M783 494L813 551L772 634L742 578z" fill="#694a28" />
              <path d="M653 558L742 578L772 634L682 615z" fill="#6b4c29" />
            </g>
            <path d="M653 558L682 615L676 596L662 572z" fill="#b02c2c" stroke="#b02c2c" />
            <path d="M682 615L772 634L754 628L745 631L720 620L700 617z" fill="#1f9a2a" stroke="#1f9a2a" />
            <path d="M682 615L701.500 584L706 568L720.500 548L724 530L711.500 544.500L704 567.500L694.500 580z" fill="#8ab4ff" />
            <g fontSize="13" fontFamily="Liberation Sans, sans-serif">
              <text x="704" y="528" fill="#2244cc">ZM</text>
              <text x="687" y="568" fill="#2244cc">ZC</text>
              <text x="655" y="556" fill="#b82020">XM</text>
              <text x="669" y="583" fill="#b82020">XC</text>
              <text x="713" y="640" fill="#1f9a1f">YC</text>
              <text x="753" y="648" fill="#1f9a1f">YM</text>
            </g>
            {/* corner triad */}
            <path d="M67 917L90 922L99 938L87 960L63 957L56 938z" fill="#8f8f8f" stroke="#aaa" />
            <path d="M56 938L79 943L99 938M79 943L87 960M67 917L79 943" stroke="#a8a8a8" fill="none" />
            <path d="M62 956L79 921L82 922L65 957z" fill="#9ab8f0" />
            <path d="M62 956L49 930L53 931L64 954z" fill="#a82828" />
            <path d="M62 955L104 966L92 968L62 958z" fill="#1f9a2a" />
            <circle cx="62" cy="956" r="3.500" fill="#ddd" />
            <g fontSize="11" fontFamily="Liberation Sans, sans-serif">
              <text x="43" y="931" fill="#b82020">X</text>
              <text x="80" y="918" fill="#2244cc">Z</text>
              <text x="104" y="971" fill="#1f9a1f">Y</text>
            </g>
          </svg>

          {/* floating info block */}
          <div className="absolute left-[898px] top-0 flex h-[16px] border border-t-0 border-[#1a78e8] text-[#1a78e8] text-[17px] leading-[15px] font-['Noto_Sans_CJK_SC',sans-serif] font-light whitespace-nowrap">
            <span className="w-[36px] text-center">设置</span>
            <span className="w-[37px] text-center border-l border-[#1a78e8]">X</span>
            <span className="w-[53px] text-center border-l border-[#1a78e8] outline-1 outline-dashed -outline-offset-1 outline-[#1a78e8]">第1页</span>
            <span className="w-[54px] pl-[3px] border-l border-[#1a78e8]">第2页</span>
            <span className="w-[54px] pl-[3px] border-l border-[#1a78e8]">第3页</span>
          </div>
          <div className="absolute left-[895px] top-[17px] w-[72px] flex flex-col items-end text-[16px] leading-[18px] text-[#c0c0c0] font-['Noto_Sans_CJK_SC',sans-serif] font-light whitespace-nowrap">
            <span>转速:</span>
            <span>进给:</span>
            <span>几何:</span>
            <span>时间:</span>
            <span>内外公差:</span>
          </div>
          <div className="absolute left-[893px] top-[93px] w-[98px] h-[24px] border-2 border-[#f00000]" />
        </div>

        {/* tool strip */}
        <div className="w-[35px] shrink-0 bg-[#e8ecfc] border-r border-[#9c9c9c] flex flex-col items-center pl-[1px] pt-[10px] gap-[7px]">
          {sideIcons}
          <div className="mt-[5px] flex items-center gap-[10px] text-[10px] leading-none"><span className="w-0 h-0 border-y-[3px] border-y-transparent border-r-[4px] border-r-black" /><span className="font-bold">»</span></div>
        </div>

        {/* navigator */}
        <div className="w-[711px] shrink-0 bg-[#e8ecfc] flex flex-col relative">
          <div className="h-[27px] shrink-0 flex items-center pl-[13px]">
            <span className="w-[11px] h-[10px] border border-t-2 border-[#222]" />
            <span className="ml-[11px] text-[11.500px] whitespace-nowrap">工序导航器 - 程序顺序</span>
          </div>
          <div className="ml-[10px] w-[693px] h-[861px] overflow-hidden border-t-2 border-[#dce8de] text-[12px] relative">
            <div className={`${gridCols} h-5 bg-[#f0f0f0] border-b-2 border-[#d8d8d8]`}>
              {cols.map((c) => (
                <div key={c} className="h-full border-r-2 border-[#dddddd] px-[5px] overflow-hidden whitespace-nowrap leading-[20px] text-[11.500px]">{c}</div>
              ))}
            </div>
            <div className="relative h-[831px] overflow-hidden">
              {rows.map((i) => <Row key={i} i={i} />)}
              <div className="absolute left-[341px] top-0 bottom-0 w-px bg-black" />
            </div>
            <div className="h-[8px] bg-[#ececec] flex items-center">
              <span className="w-[8px] text-[8px] leading-none">‹</span>
              <span className="w-[557px] h-full bg-[#c8c8c8]" />
              <span className="ml-auto mr-[8px] text-[9px] font-bold leading-none text-[#444]">›</span>
            </div>
          </div>
          <div className="absolute bottom-[6px] left-0 right-0 h-px bg-[#a8a8b8]" />
        </div>

        {/* right rail */}
        <div className="w-[17px] shrink-0 flex flex-col overflow-hidden">
          <div className="h-[166px] shrink-0 bg-[#dcdcdc] border-l border-b border-[#9c9c9c] flex flex-col items-start pl-[2px] pt-[4px]">
            <I className="w-[14px] h-[14px] ml-[2px]"><circle cx="12" cy="12" r="7" fill="none" stroke="#333" strokeWidth="4" strokeDasharray="4 2" /></I>
            <I className="w-[26px] h-[24px] mt-[30px]"><Cube k={0.5} t="#f0d060" l="#e8b030" r="#d09020" s="#a07010" /><path d="M6 11v11M6 16h12" stroke="#1a2fa8" /></I>
            <I className="w-[26px] h-[24px] mt-[19px]"><path d="M3 2l8 6-8 6zM22 2l-8 6 8 6z" fill="#1a2fd0" /><rect x="1" y="15" width="9" height="8" fill="#f8f070" stroke="#806020" /><rect x="13" y="15" width="9" height="8" fill="#b02020" /></I>
            <I className="w-[26px] h-[24px] mt-[19px]"><path d="M3 5c0-4 10-4 10 0v7c0 4-10 4-10 0z" fill="#d8a8d8" stroke="#902878" /><path d="M6 14v9M6 19h10" stroke="#1a2fa8" /></I>
          </div>
          <div className="h-[44px] shrink-0 pl-[3px] pt-[9px] bg-[#e8ecfc]">
            <I className="w-[26px] h-[24px]"><Drill x={-2} y={1} /><path d="M8 6h8M8 10h8" stroke="#5a7cd0" /><path d="M5 16v7M5 20h10" stroke="#1a2fa8" /></I>
          </div>
          <div className="flex-1 bg-[#dcdcdc] border-l border-t border-[#9c9c9c] pl-[2px] pt-[8px] flex flex-col gap-[26px]">
            <I className="w-[26px] h-[26px]"><path d="M1 10L23 1v14L4 22z" fill="#f0b878" stroke="#9060c0" /><path d="M2 14l21-6M3 18l20-6M8 6l2 16M15 3l2 16" stroke="#8a50a8" /></I>
            <I className="w-[26px] h-[26px]"><path d="M5 20l14-14 3 3-12 13z" fill="#8a9098" stroke="#333" /><path d="M1 20l6-6 5 5-3 3H3z" fill="#e88020" /></I>
          </div>
        </div>
      </div>

      {/* status strip, mostly cut off */}
      <div className="flex-1 bg-white relative overflow-hidden border-t border-[#c8c8c8]">
        <span className="absolute left-[910px] top-[3px] text-[11px] font-bold leading-[14px]">全部 1</span>
        <span className="absolute left-[1840px] top-[1px] w-[20px] h-[6px] bg-[#0c5a1c]" />
        <span className="absolute left-[1896px] top-[1px] w-[2px] h-[6px] bg-[#0c7a2c]" />
      </div>

      {/* drag-upload bubble */}
      <div className="absolute left-[1613px] top-[112px] w-[130px] h-[38px] rounded-[9px] border border-[#1a9bff] bg-[#fbfdff] flex items-center overflow-hidden">
        <span className="w-[36px] h-full bg-[#1a9bff] flex items-center justify-center">
          <I className="w-[22px] h-[22px]"><g fill="none" stroke="#fff" strokeWidth="3.400"><circle cx="12" cy="8" r="4" /><circle cx="7" cy="16" r="4" /><circle cx="17" cy="16" r="4" /></g></I>
        </span>
        <span className="ml-[5px] text-[13px] font-bold text-[#19a3ff] whitespace-nowrap">拖拽至此上传</span>
      </div>

      {/* forum watermark */}
      <span className="absolute left-[1685px] top-[1014px] text-[14px] leading-[18px] text-[#7a7a7a] whitespace-nowrap font-['Liberation_Mono','Noto_Sans_CJK_SC',monospace]">UG爱好者论坛 WWW.UGSNX.COM</span>
    </div>
  );
}
